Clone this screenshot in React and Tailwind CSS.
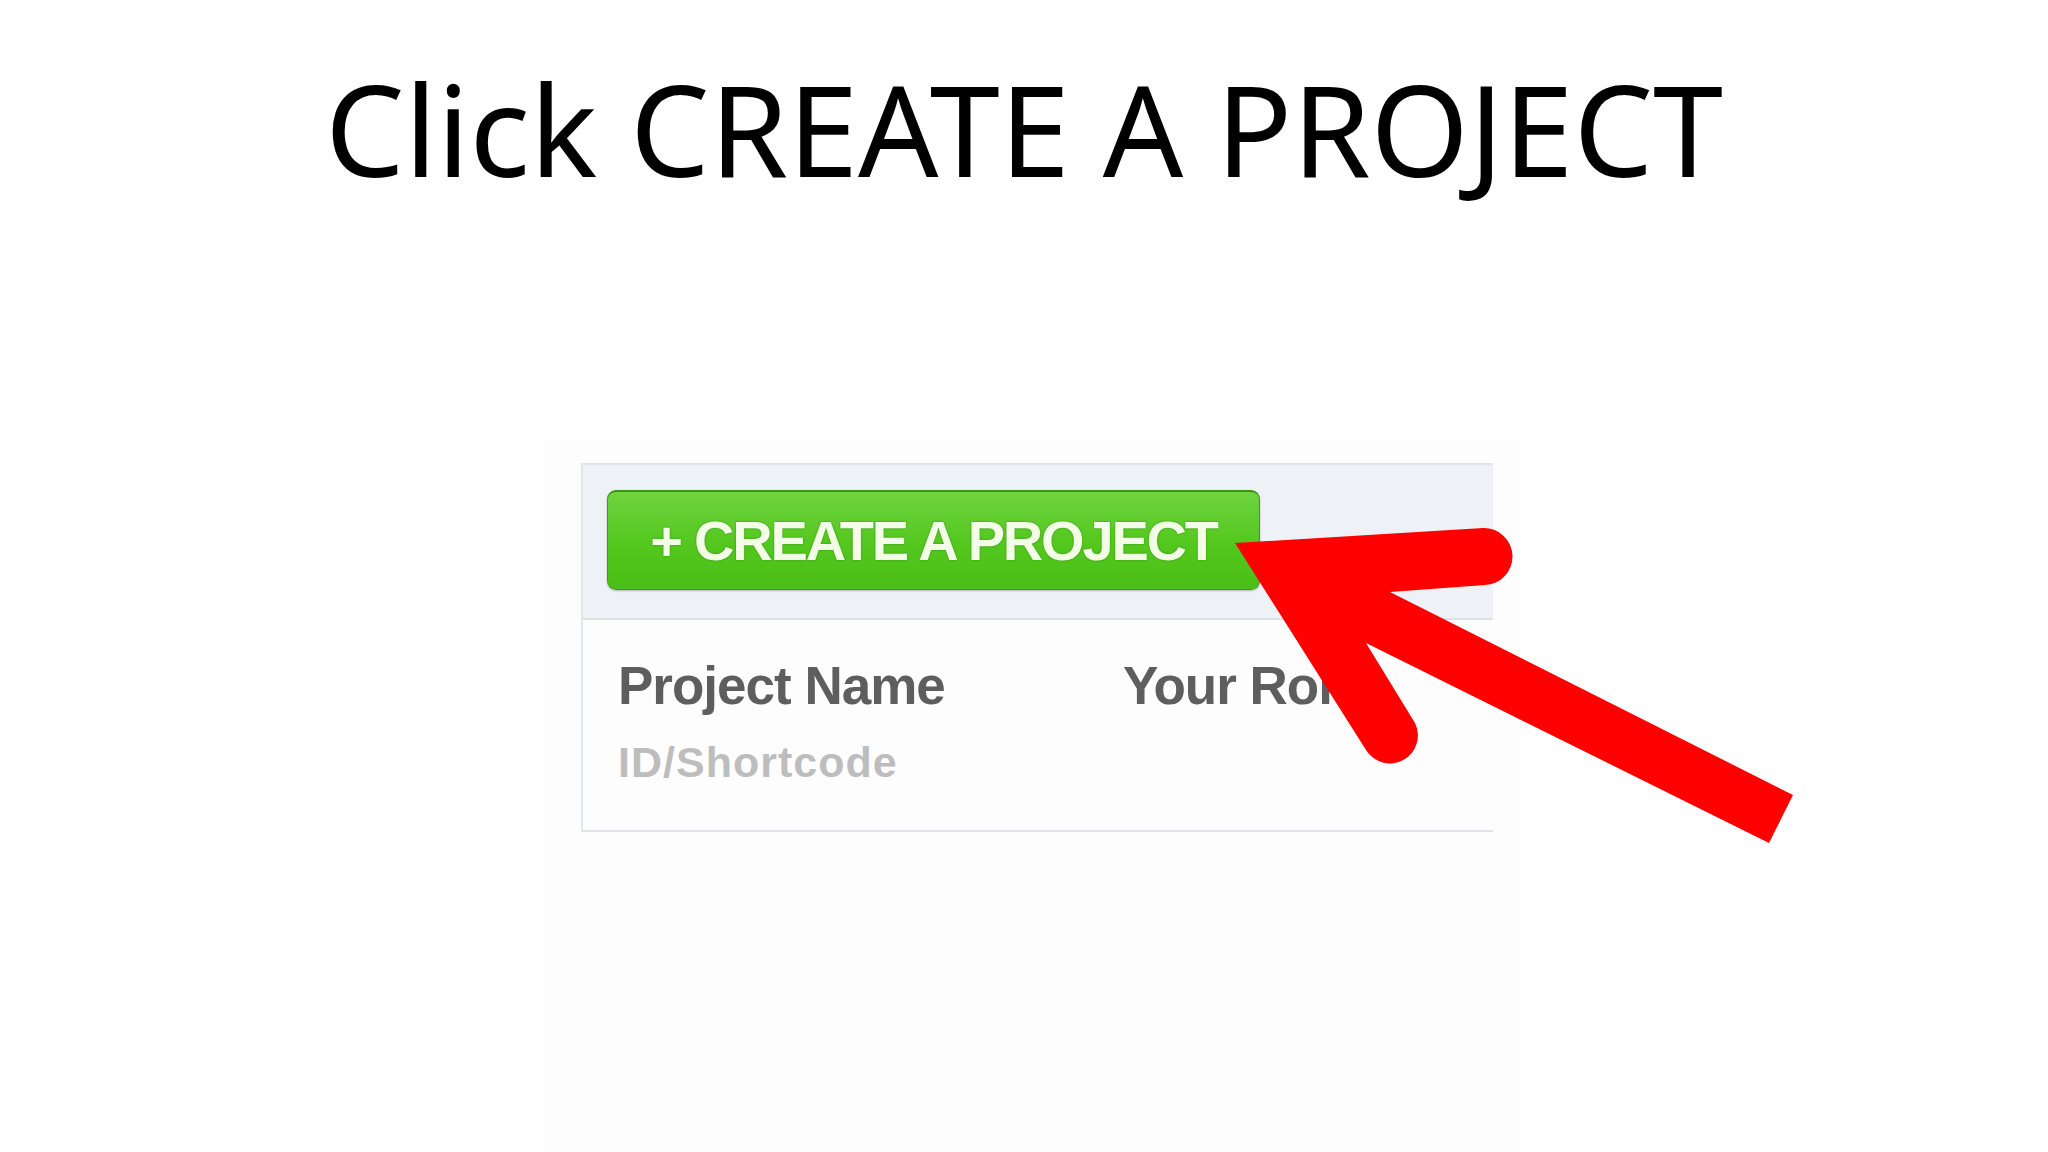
export default function App() {
  return (
    <div className="relative w-[2048px] h-[1152px] bg-white overflow-hidden">
      <h1 className="pt-[65px] h-[191px] text-center text-[126px] leading-none font-normal text-black font-['Noto_Sans',sans-serif]">
        Click CREATE A PROJECT
      </h1>
      <div className="mt-[249px] ml-[545px] w-[975px] h-[712px] bg-[#fdfdfd] pt-[23px] pl-[36px]">
        <div className="w-[912px] h-[369px] flex flex-col overflow-hidden border-l-2 border-[#e3e6ea] bg-[#fdfdfe] font-['Liberation_Sans',Arial,sans-serif]">
          <div className="h-[157px] flex-none bg-[#eef1f5] border-t-2 border-[#e0e3e8] border-b-2 border-b-[#dde1e6] pt-[25px] pl-[24px]">
            <div className="w-[653px] h-[100px] rounded-[9px] border border-[#3f9c16] border-t-2 border-t-[#3a8f14] bg-gradient-to-b from-[#6fd43e] via-[#55c81f] to-[#4bbf15] flex items-center justify-center shadow-[0_1px_2px_rgba(0,0,0,0.25)]">
              <span className="text-[56px] leading-none font-bold tracking-[-2.2px] text-[#f2ffe6] [text-shadow:0_0_2px_rgba(30,90,10,0.6)]">
                + CREATE A PROJECT
              </span>
            </div>
          </div>
          <div className="flex-1 pt-[39px] pl-[35px] flex">
            <div className="w-[505px] flex flex-col">
              <div className="text-[53px] leading-none font-bold tracking-[-1px] text-[#5e5e5e]">Project Name</div>
              <div className="mt-[29px] text-[43px] leading-none font-bold tracking-[1px] text-[#bdbdbd]">ID/Shortcode</div>
            </div>
            <div className="text-[53px] leading-none font-bold tracking-[-1px] text-[#5e5e5e] whitespace-nowrap">Your Role</div>
          </div>
          <div className="h-[2px] bg-[#dfe4e8]"></div>
        </div>
      </div>
      <svg className="absolute inset-0 pointer-events-none" width="2048" height="1152" viewBox="0 0 2048 1152">
        <path
          d="M1235 543 L1483 528 A28.5 28.5 0 0 1 1485 585 L1390 592 L1793 795 L1769 843 L1366 643 L1415 723 A28 28 0 0 1 1366 750 Z"
          fill="#ff0000"
        />
      </svg>
    </div>
  );
}
